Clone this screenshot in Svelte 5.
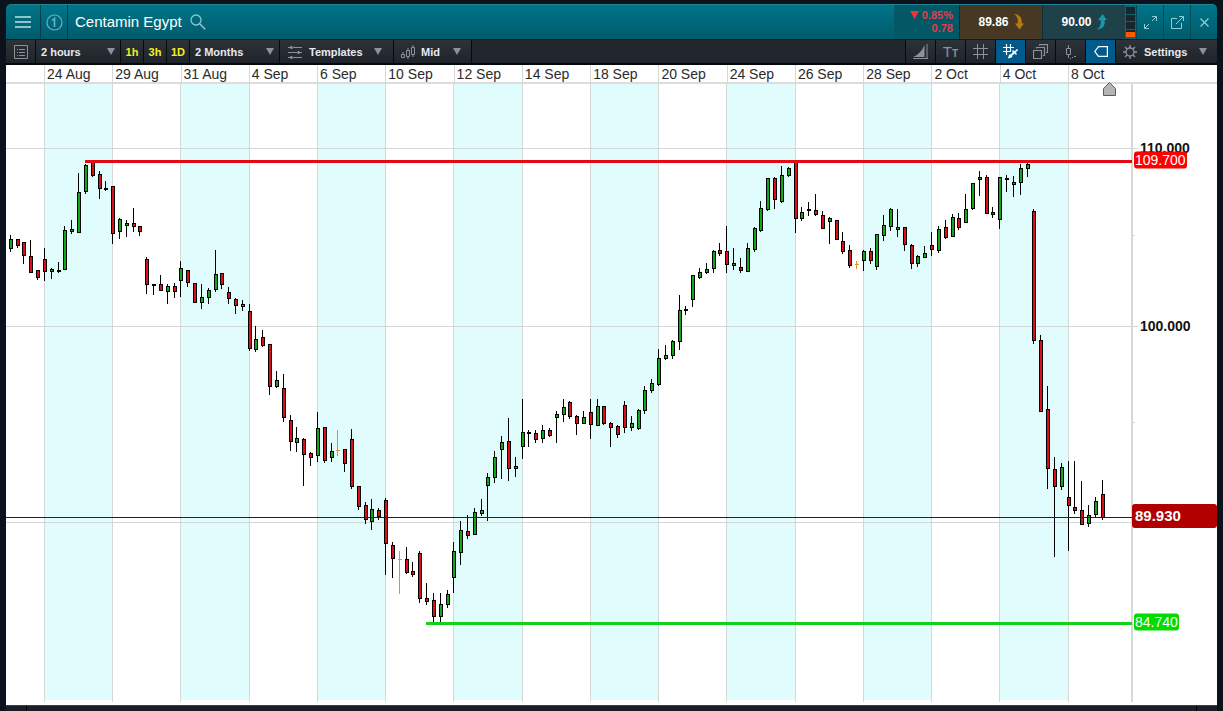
<script>
    // Toolbar state
    let interval = "2 hours";
    let range = "2 Months";
    let priceType = "Mid";
    const shortcuts = ["1h", "3h", "1D"];

    // Plot area, in drawing units
    const plotTop = 84;
    const plotHeight = 621;
    const candleStep = 6.824;

    const dates = [
        "24 Aug", "29 Aug", "31 Aug", "4 Sep", "6 Sep", "10 Sep", "12 Sep", "14 Sep",
        "18 Sep", "20 Sep", "24 Sep", "26 Sep", "28 Sep", "2 Oct", "4 Oct", "8 Oct",
    ];
    const dayLines = [
        44, 112, 180, 249, 317, 385, 453, 522, 590, 658, 726, 795, 863, 931, 999, 1068,
    ];
    // Every other day is shaded up to the next day's line
    const shadedDays = dayLines
        .map((x, index) => ({ x, width: dayLines[index + 1] - x }))
        .filter((_, index) => index % 2 === 0);
    const priceLines = [148, 326, 522];
    const minorTicks = [235, 422];

    const axisLabels = [
        { y: 148, text: "110.000", kind: "plain" },
        { y: 326, text: "100.000", kind: "plain" },
        { y: 160, text: "109.700", kind: "high" },
        { y: 516, text: "89.930", kind: "current" },
        { y: 622, text: "84.740", kind: "low" },
    ];

    // One candle each: high, body top, body bottom, low, colour
    // (g = up, r = down, k = unchanged, o = no trades)
    const candleData = `
        235 239 249 252 g|239 239 246 248 r|242 242 256 264 r|240 256 273 273 r|270 270 278 280 r
        248 259 272 281 r|268 269 272 279 g|262 270 272 273 k|226 230 270 270 g|220 229 232 234 g
        173 192 233 233 g|164 165 192 194 g|162 162 176 177 r|171 174 189 199 r|181 188 190 191 k
        186 186 234 244 r|218 219 232 239 g|220 223 226 237 g|208 223 227 232 r|226 226 232 236 r
        257 259 285 294 r|284 284 286 295 k|275 284 291 291 r|284 286 292 304 g|283 286 292 298 r
        261 268 281 297 g|270 270 283 287 r|283 283 303 303 r|284 297 303 309 g|288 290 298 304 g
        250 274 290 292 g|273 273 285 289 r|287 292 299 304 r|298 299 306 314 r|300 304 307 311 g
        304 311 349 351 r|326 339 350 352 g|330 337 346 347 r|344 344 387 395 r|371 380 387 388 g
        374 388 418 422 r|415 420 442 451 r|427 438 443 452 g|438 439 455 486 r|452 453 458 466 r
        412 428 456 462 g|427 427 461 463 r|443 451 458 462 g|430 450 451 456 o|449 449 464 472 r
        429 439 487 489 r|486 486 507 510 r|502 505 520 524 r|499 509 522 530 g|508 510 517 520 r
        498 500 544 575 r|542 545 559 578 r|551 559 560 594 o|547 559 573 574 r|562 571 575 577 r
        551 553 599 603 r|583 598 602 605 r|593 600 617 622 r|593 604 617 622 g|590 594 605 608 g
        542 551 578 593 g|521 530 553 565 g|515 531 536 539 r|508 512 535 535 g|499 510 514 516 g
        473 477 486 521 g|451 457 478 483 g|436 442 450 479 g|418 441 469 481 r|457 466 469 477 g
        399 432 447 459 g|430 432 434 447 k|430 433 440 443 r|425 430 439 443 g|428 430 436 437 r
        411 414 418 443 g|399 407 415 422 g|401 402 417 419 r|415 416 424 435 r|411 417 424 424 g
        399 412 425 439 r|399 406 426 426 g|406 406 424 425 r|422 423 428 447 r|425 426 435 438 r
        401 405 428 433 r|416 423 428 431 g|409 410 429 430 g|386 390 411 414 g|379 383 391 393 g
        349 358 385 386 g|345 355 359 360 g|340 341 356 359 g|295 310 342 350 g|306 309 311 315 k
        275 275 300 307 g|268 272 278 279 g|263 269 273 274 g|250 251 269 273 g|243 250 254 256 r
        226 251 265 273 r|248 263 266 270 g|258 267 271 273 r|243 248 272 272 g|227 228 250 252 g
        201 208 231 232 g|178 178 210 211 g|177 178 200 209 r|166 175 202 203 g|167 168 176 177 g
        162 162 219 233 r|207 212 219 221 g|202 209 211 216 k|194 210 215 216 r|211 215 229 229 r
        217 218 222 244 g|220 220 240 240 r|232 241 252 254 r|245 250 266 268 r|261 264 265 269 o
        250 251 261 271 g|248 251 261 264 r|234 234 267 270 g|215 225 236 241 g|208 209 227 231 g
        209 227 230 237 g|227 227 245 251 r|244 245 264 269 r|255 256 264 267 g|246 253 258 258 g
        232 245 250 256 r|226 229 251 253 g|220 227 238 239 r|214 217 237 237 g|213 218 228 230 r
        194 209 223 223 g|183 183 209 210 g|171 177 180 196 g|175 177 214 214 r|207 212 215 218 r
        177 177 220 229 g|175 178 180 192 k|176 182 185 197 g|164 168 183 195 g|163 164 169 177 g
        209 211 341 344 r|335 340 412 412 r|386 409 469 489 r|457 469 487 557 r|463 467 487 490 g
        461 497 506 551 r|461 507 511 514 r|481 510 525 525 r|505 515 524 527 g|497 501 515 517 g
        480 494 518 520 r`;

    const candles = candleData
        .trim()
        .split(/\||\n/)
        .map((entry, index) => {
            const [high, top, bottom, low, kind] = entry.trim().split(" ");
            return {
                x: Math.floor(9.3 + index * candleStep),
                high: +high,
                top: +top,
                bottom: +bottom,
                low: +low,
                kind,
            };
        });

    const fills = { g: "#10a81a", r: "#de0e18", k: "#111111", o: "#dc9628" };

    /* Vertical place of a label on the price axis */
    function axisPosition(y) {
        return ((y - plotTop) / plotHeight) * 100;
    }
</script>

<main class="window">
    <header class="titlebar">
        <button class="cell menu" aria-label="Menu">
            <svg width="16" height="12" viewBox="0 0 16 12" fill="#8fc3cb">
                <path d="M0 0h16v2H0zM0 5h16v2H0zM0 10h16v2H0z" />
            </svg>
        </button>
        <button class="cell group" aria-label="Link group 1">
            <svg width="17" height="17" viewBox="0 0 17 17" fill="none" stroke="#62b4c0" stroke-width="1.2">
                <circle cx="8.5" cy="8.5" r="7.5" />
                <path d="M6 6.500 8.500 4.500V13" stroke-width="1.600" />
            </svg>
        </button>
        <h1>Centamin Egypt</h1>
        <button class="search" aria-label="Search">
            <svg width="16" height="16" viewBox="0 0 16 16" fill="none" stroke="#8cc6ce" stroke-width="1.3">
                <circle cx="6" cy="6" r="5" />
                <path d="m9.700 9.700 5.500 5.500" stroke-width="1.600" />
            </svg>
        </button>
        <div class="change">
            <span><svg width="9" height="8" viewBox="0 0 9 8"><path d="M0 0h9L4.500 8z" fill="#f0323c" /></svg> 0.85%</span>
            <span>0.78</span>
        </div>
        <button class="price sell">
            89.86
            <svg width="10" height="16" viewBox="0 0 10 16" fill="#b87812">
                <path d="M0 0c5 0 8.500 3.500 7.700 9.500H10L5.500 15.500 1 9.500h2.500C4.500 5.500 3 2 0 0z" />
            </svg>
        </button>
        <button class="price buy">
            90.00
            <svg width="10" height="16" viewBox="0 0 10 16" fill="#1799a8">
                <path d="M0 15.500c5 0 8.500-3.500 7.700-9.500H10L5.500 0 1 6h2.500C4.500 10 3 13.500 0 15.500z" />
            </svg>
        </button>
        <div class="meter"><i></i><i></i><i></i><i class="hot"></i></div>
        <button class="cell tool" aria-label="Expand">
            <svg width="13" height="13" viewBox="0 0 13 13" fill="none" stroke="#8fd0d8">
                <path d="M8 .5h4.500V5M12 1 8 5M.5 8v4.500H5M1 12l4-4" />
            </svg>
        </button>
        <button class="cell tool" aria-label="Pop out">
            <svg width="13" height="13" viewBox="0 0 13 13" fill="none" stroke="#8fd0d8">
                <path d="M6 2.500H.5v10h10V7M8 .5h4.500V5M12.300.7 5 8" />
            </svg>
        </button>
        <button class="cell tool" aria-label="Close">
            <svg width="9" height="9" viewBox="0 0 9 9" fill="none" stroke="#8fd0d8" stroke-width="1.200">
                <path d="m.5.5 8 8M8.500.5l-8 8" />
            </svg>
        </button>
    </header>

    <nav class="toolbar">
        <button class="item list" aria-label="Chart list">
            <svg width="14" height="14" viewBox="0 0 14 14" fill="none" stroke="#8d9299">
                <path d="M.5.5h13v13H.5zM5 4.500h6M5 7.500h6M5 10.500h6M3 4.500h1M3 7.500h1M3 10.500h1" />
            </svg>
        </button>
        <div class="item dropdown interval">
            <select bind:value={interval} aria-label="Interval">
                <option>2 hours</option>
                <option>4 hours</option>
            </select>
            <span class="caret"></span>
        </div>
        {#each shortcuts as shortcut}
            <button class="item shortcut">{shortcut}</button>
        {/each}
        <div class="item dropdown range">
            <select bind:value={range} aria-label="Range">
                <option>2 Months</option>
                <option>3 Months</option>
            </select>
            <span class="caret"></span>
        </div>
        <button class="item templates">
            <svg width="14" height="14" viewBox="0 0 14 14" stroke="#8d9299" fill="none">
                <path d="M0 2.500h3M5 2.500h9M0 7.500h9M11 7.500h3M0 12.500h3M5 12.500h9" />
                <path d="M3.500 1v3M10.500 6v3M3.500 11v3" stroke-width="2" />
            </svg>
            Templates
            <span class="caret"></span>
        </button>
        <div class="item dropdown mid">
            <svg width="15" height="14" viewBox="0 0 15 14" fill="none" stroke="#8d9299">
                <path d="M.5 9.500h3v3h-3zM5.500 5.500h3v6h-3zM10.500 2.500h3v7h-3zM2 7v2M7 3v2M7 12v2M12 0v2M12 10v2" />
            </svg>
            <select bind:value={priceType} aria-label="Price type">
                <option>Mid</option>
                <option>Bid</option>
            </select>
            <span class="caret"></span>
        </div>
        <div class="filler"></div>
        <button class="item icon" aria-label="Draw">
            <svg width="15" height="15" viewBox="0 0 15 15" fill="#8d9299">
                <path d="M0 13C5 11 9 7 11.500 1v12zM0 14h15v1H0zM13.500 0h1v15h-1z" />
            </svg>
        </button>
        <button class="item icon glyphs" aria-label="Text size"><b>T</b><small>T</small></button>
        <button class="item icon" aria-label="Grid">
            <svg width="15" height="15" viewBox="0 0 15 15" fill="none" stroke="#8d9299">
                <path d="M4.500 0v15M10.500 0v15M0 4.500h15M0 10.500h15" />
            </svg>
        </button>
        <button class="item icon active" aria-label="Snap to grid">
            <svg width="15" height="15" viewBox="0 0 15 15" fill="none" stroke="#ffffff">
                <path d="M3.500 0v11M7.500 0v8M0 3.500h11M0 7.500h8" stroke-width="1.200" />
                <path d="M5 14.500 6 11l1.500-1 2 2-1 1.500z" fill="#ffffff" stroke="none" />
                <path d="m8.500 11 3.500-3.500" stroke-width="2" />
                <path d="m9.500 6.500 4 4M12 8l2.500-2.500" stroke-width="1.600" />
            </svg>
        </button>
        <button class="item icon" aria-label="Layers">
            <svg width="15" height="15" viewBox="0 0 15 15" fill="none" stroke="#8d9299" stroke-width="1.200">
                <path d="M.5 6.500h8v8h-8zM3.500 4.500V3.500h8V11.500H10M6.500 1.500V.6h8V8.500H13" />
            </svg>
        </button>
        <button class="item icon" aria-label="Candle marker">
            <svg width="12" height="14" viewBox="0 0 12 14" fill="none" stroke="#8d9299">
                <path d="M1.500 3.500h4v6h-4zM3.500 0v3M3.500 10v3M5 13.500h1M7 12.500h1M9 11.500h2" />
            </svg>
        </button>
        <button class="item icon active" aria-label="Price tag">
            <svg width="14" height="11" viewBox="0 0 14 11" fill="none" stroke="#ffffff" stroke-width="1.200">
                <path d="M4.500.6h8.900v9.800H4.500L.8 5.500z" />
            </svg>
        </button>
        <button class="item settings">
            <svg width="14" height="14" viewBox="0 0 14 14" fill="none" stroke="#8d9299">
                <circle cx="7" cy="7" r="4" stroke-width="1.300" />
                <path d="M7 0v3M7 11v3M0 7h3M11 7h3M2 2l2.200 2.200M9.800 9.800 12 12M2 12l2.200-2.200M9.800 4.200 12 2" stroke-width="1.400" />
            </svg>
            Settings
            <span class="caret"></span>
        </button>
    </nav>

    <section class="chart">
        <div class="dates">
            <div class="days">
                <span></span>
                {#each dates as date}
                    <span class="day">{date}</span>
                {/each}
            </div>
        </div>
        <div class="body">
            <svg class="plot" viewBox="6 84 1126 621" preserveAspectRatio="none" shape-rendering="crispEdges">
                {#each shadedDays as day}
                    <rect x={day.x} y="84" width={day.width} height="616" fill="#e0fcfd" />
                {/each}
                {#each dayLines as x}
                    <rect {x} y="84" width="1" height="618" fill="#d3d8d8" />
                {/each}
                {#each priceLines as y}
                    <rect x="6" {y} width="1132" height="1" fill="#d3d6d6" />
                {/each}
                {#each minorTicks as y}
                    <rect x="1132" {y} width="3" height="1" fill="#d8d8d8" />
                {/each}
                <rect x="1131" y="84" width="2" height="618" fill="#d8d8d8" />

                {#each candles as candle}
                    {#if candle.kind === "o"}
                        <rect x={candle.x + 1} y={candle.high} width="1" height={candle.low - candle.high} fill={fills.o} />
                        <rect x={candle.x} y={candle.top} width="4" height="1" fill={fills.o} />
                    {:else}
                        <rect x={candle.x + 1} y={candle.high} width="1" height={candle.low - candle.high} />
                        <rect x={candle.x} y={candle.top} width="4" height={candle.bottom - candle.top} />
                        {#if candle.bottom - candle.top > 2}
                            <rect
                                x={candle.x + 1}
                                y={candle.top + 1}
                                width="2"
                                height={candle.bottom - candle.top - 2}
                                fill={fills[candle.kind]}
                            />
                        {/if}
                    {/if}
                {/each}

                <!-- Current price, resistance and support -->
                <rect x="6" y="517" width="1126" height="1" fill="#222222" />
                <rect x="85" y="160" width="1047" height="3" fill="#e30b13" />
                <rect x="426" y="622" width="706" height="3" fill="#14cf1c" />
                <path
                    d="M1103.500 95.500V88.500l6-6 6 6v7z"
                    fill="#b4b4b4"
                    stroke="#5c5c5c"
                    shape-rendering="auto"
                />
            </svg>
            <div class="axis">
                {#each axisLabels as label}
                    <span class="label {label.kind}" style="top: {axisPosition(label.y)}%">{label.text}</span>
                {/each}
            </div>
        </div>
    </section>
    <footer></footer>
</main>

<style>
    :global(body) {
        margin: 0;
        background: #0b121b;
    }

    .window {
        box-sizing: border-box;
        display: flex;
        flex-direction: column;
        height: 100vh;
        min-height: 400px;
        padding: 4px 6px 0;
        font-family: "Liberation Sans", Arial, sans-serif;
    }

    button,
    select {
        margin: 0;
        padding: 0;
        border: 0;
        background: none;
        color: inherit;
        font: inherit;
        cursor: pointer;
    }

    svg {
        display: block;
        flex: none;
    }

    .titlebar {
        display: flex;
        align-items: stretch;
        height: 35px;
        border-top: 1px solid #1e8494;
        box-sizing: border-box;
        border-radius: 5px 5px 0 0;
        overflow: hidden;
        background: linear-gradient(#00758a, #005b6b);
    }

    .cell {
        display: flex;
        align-items: center;
        justify-content: center;
        box-sizing: border-box;
        width: 27px;
    }

    .menu {
        width: 35px;
        border-right: 1px solid #083c48;
    }

    .group {
        border-right: 1px solid #083c48;
    }

    h1 {
        margin: 0 8px 0 7px;
        color: #ffffff;
        font-size: 15px;
        font-weight: normal;
        line-height: 34px;
        white-space: nowrap;
    }

    .search {
        display: flex;
        align-items: center;
        margin-right: auto;
    }

    .change {
        display: flex;
        flex-direction: column;
        justify-content: center;
        align-items: flex-end;
        box-sizing: border-box;
        width: 65px;
        padding-right: 6px;
        background: #035866;
        color: #e03c4b;
        font-size: 11px;
        font-weight: bold;
        line-height: 13px;
    }

    .change svg {
        display: inline-block;
    }

    .price {
        display: flex;
        align-items: center;
        justify-content: center;
        gap: 5px;
        box-sizing: border-box;
        width: 83px;
        border-left: 1px solid #0b2f37;
        color: #ffffff;
        font-size: 12px;
        font-weight: bold;
    }

    .sell {
        background: #463822;
    }

    .buy {
        background: #1f424a;
    }

    .meter {
        display: flex;
        flex-direction: column;
        gap: 1px;
        box-sizing: border-box;
        width: 11px;
        padding: 2px 1px;
        background: #0f6472;
    }

    .meter i {
        flex: 1;
        background: #15272d;
    }

    .meter .hot {
        flex: none;
        height: 5px;
        border-top: 2px solid #15272d;
        background: #ff5a00;
    }

    .tool {
        border-left: 1px solid #064a57;
    }

    .toolbar {
        display: flex;
        box-sizing: border-box;
        height: 26px;
        border-top: 1px solid #101c22;
        border-bottom: 2px solid #05080b;
        background: linear-gradient(#2d3239, #1f232a);
        color: #e6e9ee;
        font-size: 11px;
        font-weight: bold;
    }

    .item {
        display: flex;
        align-items: center;
        box-sizing: border-box;
        border-right: 1px solid #07090c;
        white-space: nowrap;
    }

    .list {
        justify-content: center;
        width: 30px;
    }

    .dropdown {
        position: relative;
    }

    .dropdown select {
        flex: 1;
        min-width: 0;
        height: 100%;
        padding-left: 5px;
        appearance: none;
        outline: none;
    }

    .dropdown .caret {
        position: absolute;
        right: 5px;
        pointer-events: none;
    }

    .caret {
        width: 0;
        border: 4px solid transparent;
        border-top: 7px solid #8d9299;
        border-bottom: 0;
    }

    .interval {
        width: 85px;
    }

    .shortcut {
        justify-content: center;
        width: 23px;
        color: #f4f020;
    }

    .range {
        width: 90px;
    }

    .templates {
        gap: 7px;
        width: 114px;
        padding-left: 8px;
    }

    .templates .caret,
    .settings .caret {
        margin-left: auto;
        margin-right: 11px;
    }

    .mid {
        width: 78px;
        padding-left: 7px;
    }

    .mid .caret {
        right: 10px;
    }

    .filler {
        flex: 1;
        background: #22262d;
        border-right: 1px solid #07090c;
    }

    .icon {
        justify-content: center;
        width: 30px;
    }

    .active {
        background: #005a8c;
    }

    .glyphs {
        align-items: baseline;
        padding-top: 3px;
        color: #8d9299;
    }

    .glyphs b {
        font-size: 15px;
        font-weight: normal;
    }

    .glyphs small {
        font-size: 10px;
    }

    .settings {
        gap: 7px;
        width: 101px;
        padding-left: 7px;
        border-right: 0;
    }

    .settings .caret {
        margin-right: 10px;
    }

    .chart {
        display: flex;
        flex: 1;
        flex-direction: column;
        min-height: 0;
        background: #ffffff;
    }

    .dates {
        box-sizing: border-box;
        height: 19px;
        padding-right: 85px;
        border-bottom: 2px solid #dcdcdc;
    }

    .days {
        display: grid;
        grid-template-columns: minmax(0, 557fr) repeat(15, minmax(0, 1000fr)) minmax(0, 938fr);
        height: 100%;
    }

    .day {
        padding-left: 2px;
        border-left: 1px solid #d3d8d8;
        color: #2b2b2b;
        font-size: 14px;
        line-height: 19px;
        white-space: nowrap;
    }

    .body {
        display: flex;
        flex: 1;
        min-height: 0;
    }

    .plot {
        flex: 1;
        min-width: 0;
        height: 100%;
        overflow: visible;
    }

    .axis {
        position: relative;
        width: 85px;
    }

    .label {
        position: absolute;
        left: 2px;
        padding: 0 1px;
        border-radius: 3px;
        color: #ffffff;
        font-size: 14px;
        line-height: 17px;
        transform: translateY(-50%);
    }

    .plain {
        left: 7px;
        color: #111111;
        font-weight: bold;
    }

    .high {
        background: #ff0000;
    }

    .low {
        background: #00dc00;
    }

    .current {
        left: 0;
        right: 0;
        padding: 0 3px;
        background: #b00000;
        font-size: 15px;
        font-weight: bold;
        line-height: 24px;
    }

    footer {
        height: 6px;
        box-sizing: border-box;
        margin: 0;
        border-top: 1px solid #3a3f46;
        background: linear-gradient(90deg, transparent 20px, #000000 20px, #000000 21px, transparent 21px),
            linear-gradient(270deg, #1a1e26 20px, #000000 20px, #000000 21px, #1a1e26 21px);
    }
</style>
